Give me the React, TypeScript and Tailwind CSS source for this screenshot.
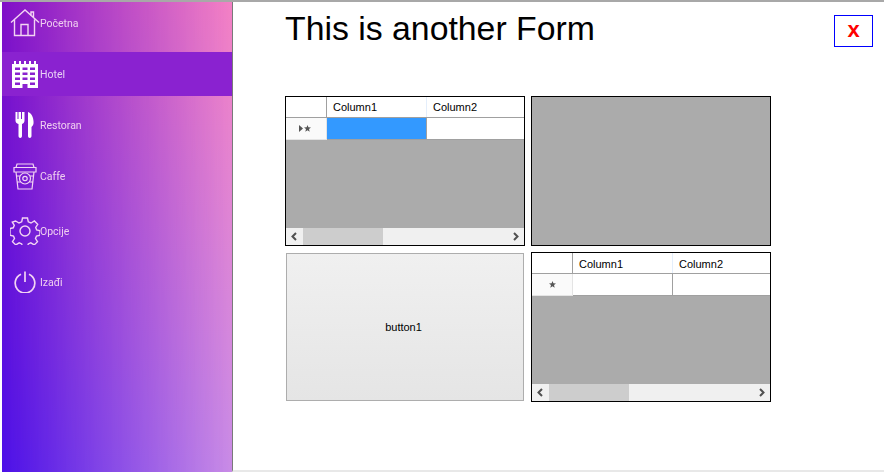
import type { ReactNode } from "react";

/* Sidebar icons: hand-drawn to follow the WinForms bitmaps */
function HomeIcon() {
  return (
    <svg width="30" height="28" viewBox="0 0 30 28" fill="none" stroke="#f3d4f3" strokeWidth="1.400">
      <path d="M1 13.500 15 1l14 12.500M4.500 10.500V26.500h20V10.500M11 26.500V15.500h7v11M21 7V3h2.500v6" />
    </svg>
  );
}

function HotelIcon() {
  return (
    <svg width="26" height="27" viewBox="0 0 26 27" fill="#fff">
      <path d="M0 3h26v24H15.500v-4h-5v4H0z" />
      <path d="M2 0h2v3H2zM7 0h2v3H7zM12 0h2v3h-2zM17 0h2v3h-2zM22 0h2v3h-2z" />
      <g fill="#8a22d0">
        <path d="M3 6.500h5V9H3zM10.500 6.500h5V9h-5zM18 6.500h5V9h-5zM3 11.500h5V14H3zM10.500 11.500h5V14h-5zM18 11.500h5V14h-5zM3 16.500h5V19H3zM10.500 16.500h5V19h-5zM18 16.500h5V19h-5zM3 21.500h5V24H3zM18 21.500h5V24h-5z" />
      </g>
    </svg>
  );
}

function CutleryIcon() {
  return (
    <svg width="20" height="26" viewBox="0 0 20 26" fill="#fff">
      <path d="M.5 0h2v7h1V0h2.500v7h1V0H9.500v8.500c0 2-1 3-2.500 3.500v12c0 2.600-3.500 2.600-3.500 0V12C1.500 11.500.5 10.500.5 8.500z" />
      <path d="M13 0c3.500 1 6 6 5.500 11.500-.2 2-1.500 3-2 3.500v9c0 2.600-3.500 2.600-3.500 0z" />
    </svg>
  );
}

function CupIcon() {
  return (
    <svg width="24" height="27" viewBox="0 0 24 27" fill="none" stroke="#f3d4f3" strokeWidth="1.200">
      <path d="M4 1h16l1 3.500H3zM1 4.500h22V9H1zM3 9l2 17h14l2-17M3.500 13h3.500M17 13h3.500M3.800 19H7.500M16.500 19h3.700" />
      <circle cx="12" cy="15.500" r="5.500" />
      <circle cx="12" cy="15.500" r="2.200" />
    </svg>
  );
}

function GearIcon() {
  return (
    <svg width="30" height="28" viewBox="0 0 30 28" fill="none" stroke="#f3d4f3" strokeWidth="1.400">
      <path d="M12.500 1h5l.8 3.800 2.700 1.200 3.400-2 3.300 3.300-2 3.200 1 2.500 3.300.7v4.500l-3.500.8-1 2.500 2 3.200-3.300 3.200-3.400-2-2.500 1-.8 3.100h-5l-.8-3.100-2.500-1-3.400 2-3.300-3.200 2-3.200-1-2.500-3.500-.8V11.500l3.300-.7 1-2.500-2-3.200L5.600 4l3.400 2 2.700-1.200z" />
      <circle cx="15" cy="14" r="5" />
    </svg>
  );
}

function PowerIcon() {
  return (
    <svg width="22" height="22" viewBox="0 0 22 22" fill="none" stroke="#f3d4f3" strokeWidth="1.700">
      <path d="M7 3.200a9.800 9.800 0 1 0 8 0M11 .500V11" />
    </svg>
  );
}

type NavItemProps = {
  icon: ReactNode;
  label: string;
  rowClass: string;
  active?: boolean;
};

function NavItem({ icon, label, rowClass, active }: NavItemProps) {
  return (
    <div className={`flex items-center pl-[7px] ${rowClass} ${active ? "bg-[#8a22d0] text-[#e9d0f5]" : "text-[#f0cff0]"}`}>
      <div className="flex w-[31px] justify-center blur-[0.3px]">{icon}</div>
      <span className="mt-[2px] text-[10.5px] leading-none blur-[0.3px]">{label}</span>
    </div>
  );
}

function Grid({ selected, rowMark, headerLeading }: { selected?: boolean; rowMark: ReactNode; headerLeading: string }) {
  return (
    <div className="flex h-[150px] w-[240px] flex-col overflow-hidden border border-black bg-[#ababab] text-[11px] text-black">
      <div className="flex h-[21px] flex-none border-b border-[#a0a0a0] bg-white">
        <div className="w-[41px] flex-none border-r border-[#a0a0a0]" />
        <div className={`w-[100px] flex-none border-r border-[#e4eefb] pl-[6px] ${headerLeading}`}>Column1</div>
        <div className={`flex-1 pl-[6px] ${headerLeading}`}>Column2</div>
      </div>
      <div className="flex h-[22px] flex-none">
        <div className="flex w-[41px] flex-none items-center justify-center border-r border-b border-[#e4e4e4] bg-[#fafafa]">
          {rowMark}
        </div>
        <div className={`w-[100px] flex-none border-r border-b border-[#a0a0a0] ${selected ? "bg-[#3399ff]" : "bg-white"}`} />
        <div className="flex-1 border-b border-[#a0a0a0] bg-white" />
      </div>
      <div className="flex-1" />
      <div className="flex h-[17px] flex-none items-center bg-[#f0f0f0]">
        <svg width="17" height="17" viewBox="0 0 17 17" fill="none" stroke="#505050" strokeWidth="2" className="flex-none">
          <path d="M10 5 6.500 8.500 10 12" />
        </svg>
        <div className="h-full w-20 flex-none bg-[#cdcdcd]" />
        <div className="flex-1" />
        <svg width="17" height="17" viewBox="0 0 17 17" fill="none" stroke="#505050" strokeWidth="2" className="flex-none">
          <path d="M7 5l3.500 3.500L7 12" />
        </svg>
      </div>
    </div>
  );
}

function StarMark() {
  return (
    <svg width="7" height="7" viewBox="0 0 7 7" fill="#555">
      <path d="M3.500 0 4.400 2.300 7 2.500 5 4.100 5.700 6.800 3.500 5.300 1.300 6.800 2 4.100 0 2.500 2.600 2.300z" />
    </svg>
  );
}

export default function App() {
  return (
    <div className="flex h-[472px] w-[884px] overflow-hidden bg-white pl-[2px] pt-[2px] font-['Liberation_Sans',sans-serif]">
      <div className="fixed inset-x-0 top-0 h-[2px] bg-[#a8a8a8]" />

      {/* Sidebar: bilinear gradient from two vertical layers */}
      <aside className="relative h-full w-[230px] flex-none bg-[linear-gradient(to_bottom,#8010c8,#4c10e8)] font-['Roboto',sans-serif]">
        <div className="absolute inset-0 bg-[linear-gradient(to_bottom,#f481c4,#c98ce6)] [mask-image:linear-gradient(to_right,transparent,black)]" />
        <nav className="relative flex flex-col">
          <NavItem icon={<HomeIcon />} label="Početna" rowClass="h-[50px] pb-[8px]" />
          <NavItem icon={<HotelIcon />} label="Hotel" rowClass="h-[44px]" active />
          <NavItem icon={<CutleryIcon />} label="Restoran" rowClass="h-[58px]" />
          <NavItem icon={<CupIcon />} label="Caffe" rowClass="h-[44px]" />
          <NavItem icon={<GearIcon />} label="Opcije" rowClass="h-[66px]" />
          <NavItem icon={<PowerIcon />} label="Izađi" rowClass="h-[36px]" />
        </nav>
      </aside>

      <main className="flex h-[470px] flex-1 flex-col border-l border-[#7a7a7a] border-b-2 border-b-[#e8e8e8] pl-[52px]">
        <div className="flex h-[94px] flex-none items-start">
          <h1 className="w-[310px] flex-none pt-[7px] text-[33.800px] leading-[38px] whitespace-nowrap text-black">This is another Form</h1>
          <button className="ml-[239px] mt-[13px] h-[32px] w-[39px] border border-[#0000ff] pb-[3px] text-[22px] font-bold leading-none text-[#ff0000]">
            x
          </button>
        </div>
        <div className="grid w-[487px] grid-cols-[240px_240px] gap-x-[6px] gap-y-[6px]">
          <Grid
            selected
            headerLeading="leading-[20px]"
            rowMark={
              <span className="mr-[2px] flex items-center gap-[1px]">
                <svg width="4" height="7" viewBox="0 0 4 7" fill="#555">
                  <path d="M0 0l4 3.500L0 7z" />
                </svg>
                <StarMark />
              </span>
            }
          />
          <div className="h-[150px] border border-black bg-[#ababab]" />
          <button className="mt-[1px] h-[148px] w-[238px] justify-self-center border border-[#adadad] bg-[linear-gradient(to_bottom,#f0f0f0,#e5e5e5)] pr-[3px] text-[11px] text-black">
            button1
          </button>
          <Grid headerLeading="leading-[22px]" rowMark={<StarMark />} />
        </div>
      </main>
    </div>
  );
}
